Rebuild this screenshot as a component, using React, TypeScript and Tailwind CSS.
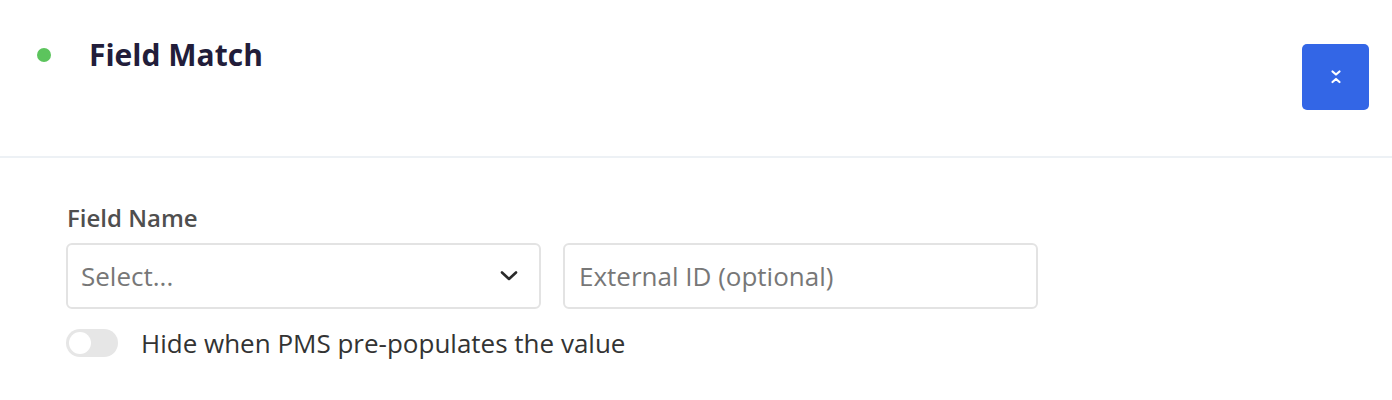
export default function App() {
  return (
    <div className="w-[1392px] h-[400px] bg-white font-['Open_Sans',sans-serif]">
      {/* Header */}
      <div className="flex items-start justify-between h-[158px] border-b-2 border-[#edf1f5] pl-[37px] pr-[23px]">
        <div className="flex items-center gap-[38px] pt-[35px]">
          <span className="w-[14px] h-[14px] rounded-full bg-[#5cc45d]" />
          <h2 className="text-[30px] font-bold text-[#221d3a] leading-[40px]">Field Match</h2>
        </div>
        <button className="mt-[44px] w-[67px] h-[66px] rounded-[5px] bg-[#3366e6] flex items-center justify-center">
          <svg width="14" height="20" viewBox="0 0 14 20" fill="none" stroke="white" strokeWidth="2.2" strokeLinecap="round" strokeLinejoin="round">
            <path d="M3.5 4.5 L7 7.5 L10.5 4.5" />
            <path d="M3.5 15 L7 12 L10.5 15" />
          </svg>
        </button>
      </div>

      {/* Body */}
      <div className="pl-[66px] pt-[43px]">
        <label className="block text-[24px] font-semibold text-[#4f4f4f] leading-[34px] pl-[1px]">Field Name</label>
        <div className="flex gap-[22px] mt-[8px]">
          <div className="w-[475px] h-[66px] rounded-[6px] border-2 border-[#e3e3e3] flex items-center justify-between pl-[13px] pr-[21px]">
            <span className="text-[26px] text-[#777777]">Select...</span>
            <svg width="18" height="12" viewBox="0 0 18 12" fill="none" stroke="#2a2a2a" strokeWidth="2.6" strokeLinecap="round" strokeLinejoin="round">
              <path d="M2 2.5 L9 9 L16 2.5" />
            </svg>
          </div>
          <div className="w-[475px] h-[66px] rounded-[6px] border-2 border-[#e3e3e3] flex items-center pl-[14px]">
            <span className="text-[26px] text-[#777777]">External ID (optional)</span>
          </div>
        </div>
        <div className="flex items-center gap-[23px] mt-[17px]">
          <div className="w-[52px] h-[28px] rounded-full bg-[#e6e6e6] p-[3px] flex items-center">
            <span className="w-[22px] h-[22px] rounded-full bg-white" />
          </div>
          <span className="text-[26px] text-[#333333] leading-[34px]">Hide when PMS pre-populates the value</span>
        </div>
      </div>
    </div>
  )
}
